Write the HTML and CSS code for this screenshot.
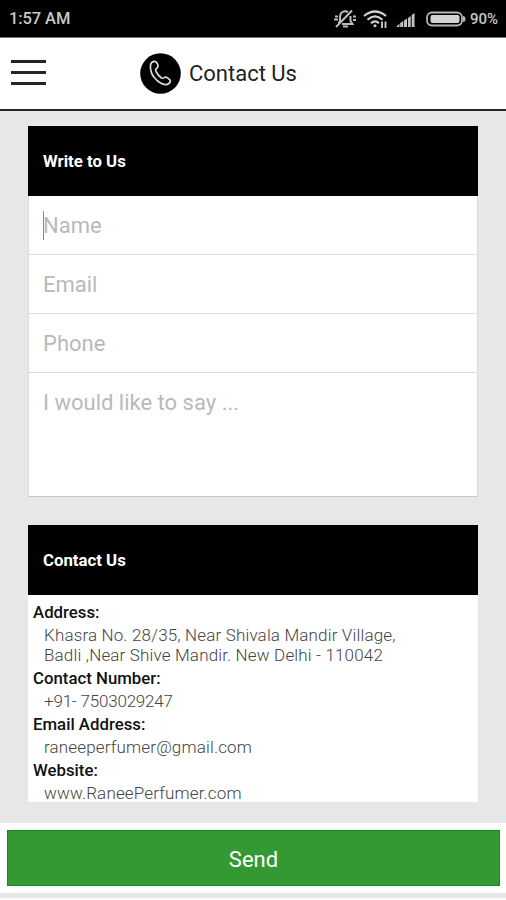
FILE: index.html
```
<!DOCTYPE html>
<html lang="en">
<head>
    <meta charset="UTF-8">
    <meta name="viewport" content="width=device-width, initial-scale=1.0">
    <title>Contact Us</title>
    <link rel="stylesheet" href="styles.css">
</head>
<body>
    <div class="status-bar">
        <span class="time">1:57 AM</span>
        <div class="status-icons">
            <!-- Silent mode -->
            <svg width="24" height="20" viewBox="0 0 24 20" fill="none" stroke="#bcbcbc" stroke-width="2">
                <path d="M15 3Q12 1.500 9.500 3Q7 4.500 7 8V12L5.500 14.500M17.500 7V12L19.500 15H9M10 17.500H15M3 18L19 1.500"/>
                <path d="M2 7.500H5M1 10.500H5M20 7.500H23M20 11H23"/>
            </svg>
            <!-- Wifi -->
            <svg class="wifi" width="26" height="20" viewBox="0 0 26 20" fill="none" stroke="#d0d0d0" stroke-width="2.200">
                <path d="M1 7Q12 -2 23 7M4.500 10.800Q12 4 19.500 10.800M8 14.300Q12 10.500 16 14.300"/>
                <circle cx="12" cy="16.800" r="1.500" fill="#d0d0d0" stroke="none"/>
                <path d="M19 12.500V19M22.500 12.500V19" stroke-width="1.800"/>
            </svg>
            <!-- Signal -->
            <svg class="signal" width="20" height="16" viewBox="0 0 20 16" fill="#c4c4c4">
                <path d="M0 15L3.500 11.500V15ZM4.200 11L7.200 9V15H4.200ZM8 8.500L11 6.500V15H8ZM12 6L14.700 4V15H12ZM15.700 3L18.500 1V15H15.700Z"/>
            </svg>
            <!-- Battery -->
            <svg class="battery" width="40" height="16" viewBox="0 0 40 16">
                <rect x="1" y="1.500" width="35" height="13" rx="5" fill="none" stroke="#b4b4b4" stroke-width="1.800"/>
                <rect x="4.500" y="4" width="29" height="8" rx="2" fill="#d2d2d2"/>
                <path d="M37 5Q39.500 5 39.500 8T37 11" fill="#b4b4b4"/>
            </svg>
            <span class="percent">90%</span>
        </div>
    </div>

    <header class="header">
        <button class="menu" aria-label="Menu">
            <span></span>
            <span></span>
            <span></span>
        </button>
        <svg class="phone-icon" width="41" height="41" viewBox="0 0 41 41">
            <circle cx="20.500" cy="20.500" r="20.300" fill="#000"/>
            <path d="M10.500 12Q11 9 14 8.300Q16.500 8 17.800 11.500Q18.500 14 16.700 15.200Q15 16.500 16 18.500Q18 22.500 21.500 25Q23 25.700 24.300 24.500Q25.800 23.500 28 25.200Q31 27.300 30.300 28.700Q29 31.500 26 31.700Q22 31.500 17 27.500Q9.500 20.500 10.500 12Z" fill="none" stroke="#d8d8d8" stroke-width="1.700"/>
        </svg>
        <h1>Contact Us</h1>
    </header>

    <main class="content">
        <form class="card form-card">
            <h2>Write to Us</h2>
            <div class="field">
                <span class="caret"></span>
                <input type="text" placeholder="Name">
            </div>
            <div class="field">
                <input type="email" placeholder="Email">
            </div>
            <div class="field">
                <input type="tel" placeholder="Phone">
            </div>
            <div class="field field-message">
                <textarea placeholder="I would like to say ..."></textarea>
            </div>
        </form>

        <section class="card info-card">
            <h2>Contact Us</h2>
            <dl class="info">
                <dt>Address:</dt>
                <dd>Khasra No. 28/35, Near Shivala Mandir Village,<br>Badli ,Near Shive Mandir. New Delhi - 110042</dd>
                <dt>Contact Number:</dt>
                <dd class="number">+91- 7503029247</dd>
                <dt>Email Address:</dt>
                <dd>raneeperfumer@gmail.com</dd>
                <dt>Website:</dt>
                <dd>www.RaneePerfumer.com</dd>
            </dl>
        </section>
    </main>

    <footer class="footer">
        <button class="send">Send</button>
    </footer>
</body>
</html>
```
FILE: styles.css
```
* {
    box-sizing: border-box;
}

body {
    margin: 0;
    height: 900px;
    display: flex;
    flex-direction: column;
    overflow: hidden;
    background-color: #e7e7e7;
    border-bottom: 2px solid #fff;
    font-family: Roboto, sans-serif;
}

.status-bar {
    height: 38px;
    padding: 0 8px 0 9px;
    display: flex;
    align-items: center;
    justify-content: space-between;
    background-color: #000;
    border-bottom: 1px solid #777;
    color: #c8c8c8;
}

.time {
    font-size: 16.5px;
    font-weight: 500;
    letter-spacing: -0.1px;
}

.status-icons {
    display: flex;
    align-items: center;
}

.wifi {
    margin-left: 6px;
}

.signal {
    margin: 2px 0 0 7px;
}

.battery {
    margin-left: 10px;
}

.percent {
    margin-left: 4px;
    font-size: 15px;
    font-weight: 500;
}

.header {
    height: 73px;
    padding: 0 11px;
    display: flex;
    align-items: center;
    background-color: #fff;
    border-bottom: 2px solid #2b2829;
}

.menu {
    width: 35px;
    padding: 0;
    margin-top: -2px;
    display: flex;
    flex-direction: column;
    gap: 8px;
    border: none;
    background: none;
}

.menu span {
    height: 3px;
    background-color: #252525;
}

.phone-icon {
    margin-left: 94px;
}

h1 {
    margin: 0 0 0 8px;
    font-size: 22px;
    font-weight: 400;
    color: #222;
}

.content {
    height: 712px;
    padding: 15px 28px 0;
}

.card {
    background-color: #fff;
}

.card h2 {
    height: 70px;
    margin: 0;
    padding-left: 15px;
    display: flex;
    align-items: center;
    background-color: #000;
    color: #fff;
    font-size: 16.8px;
    font-weight: 700;
}

.form-card {
    height: 371px;
    margin-bottom: 28px;
}

.field {
    position: relative;
    height: 59px;
    padding-left: 14px;
    border: 1px solid #dcdcdc;
    border-top: none;
}

.field-message {
    height: 124px;
    border-bottom-color: #c8c8c8;
}

.field input,
.field textarea {
    width: 100%;
    height: 100%;
    padding: 1px 0 0;
    border: none;
    outline: none;
    resize: none;
    background: none;
    font-family: inherit;
    font-size: 22px;
}

.field textarea {
    padding-top: 17px;
}

.field ::placeholder {
    color: #b9b9b9;
}

.caret {
    position: absolute;
    left: 14px;
    top: 15px;
    width: 1px;
    height: 29px;
    background-color: #888;
}

.info-card {
    height: 277px;
    overflow: hidden;
}

.info {
    margin: 0;
    padding: 6.5px 5px 0;
}

.info dt {
    font-size: 16.8px;
    line-height: 20px;
    font-weight: 500;
    color: #111;
}

.info dd {
    margin: 3px 0 3.3px 11px;
    font-size: 17px;
    line-height: 20px;
    font-weight: 300;
    letter-spacing: 0.16px;
    color: #444;
}

.info .number {
    letter-spacing: -0.2px;
}

.footer {
    height: 70px;
    padding: 7px 6px 7px 7px;
    background-color: #fff;
}

.send {
    display: block;
    width: 100%;
    height: 56px;
    padding: 2px 0 0;
    border: 1px solid #12891a;
    background-color: #339933;
    color: #fff;
    font-family: inherit;
    font-size: 22px;
}
```
